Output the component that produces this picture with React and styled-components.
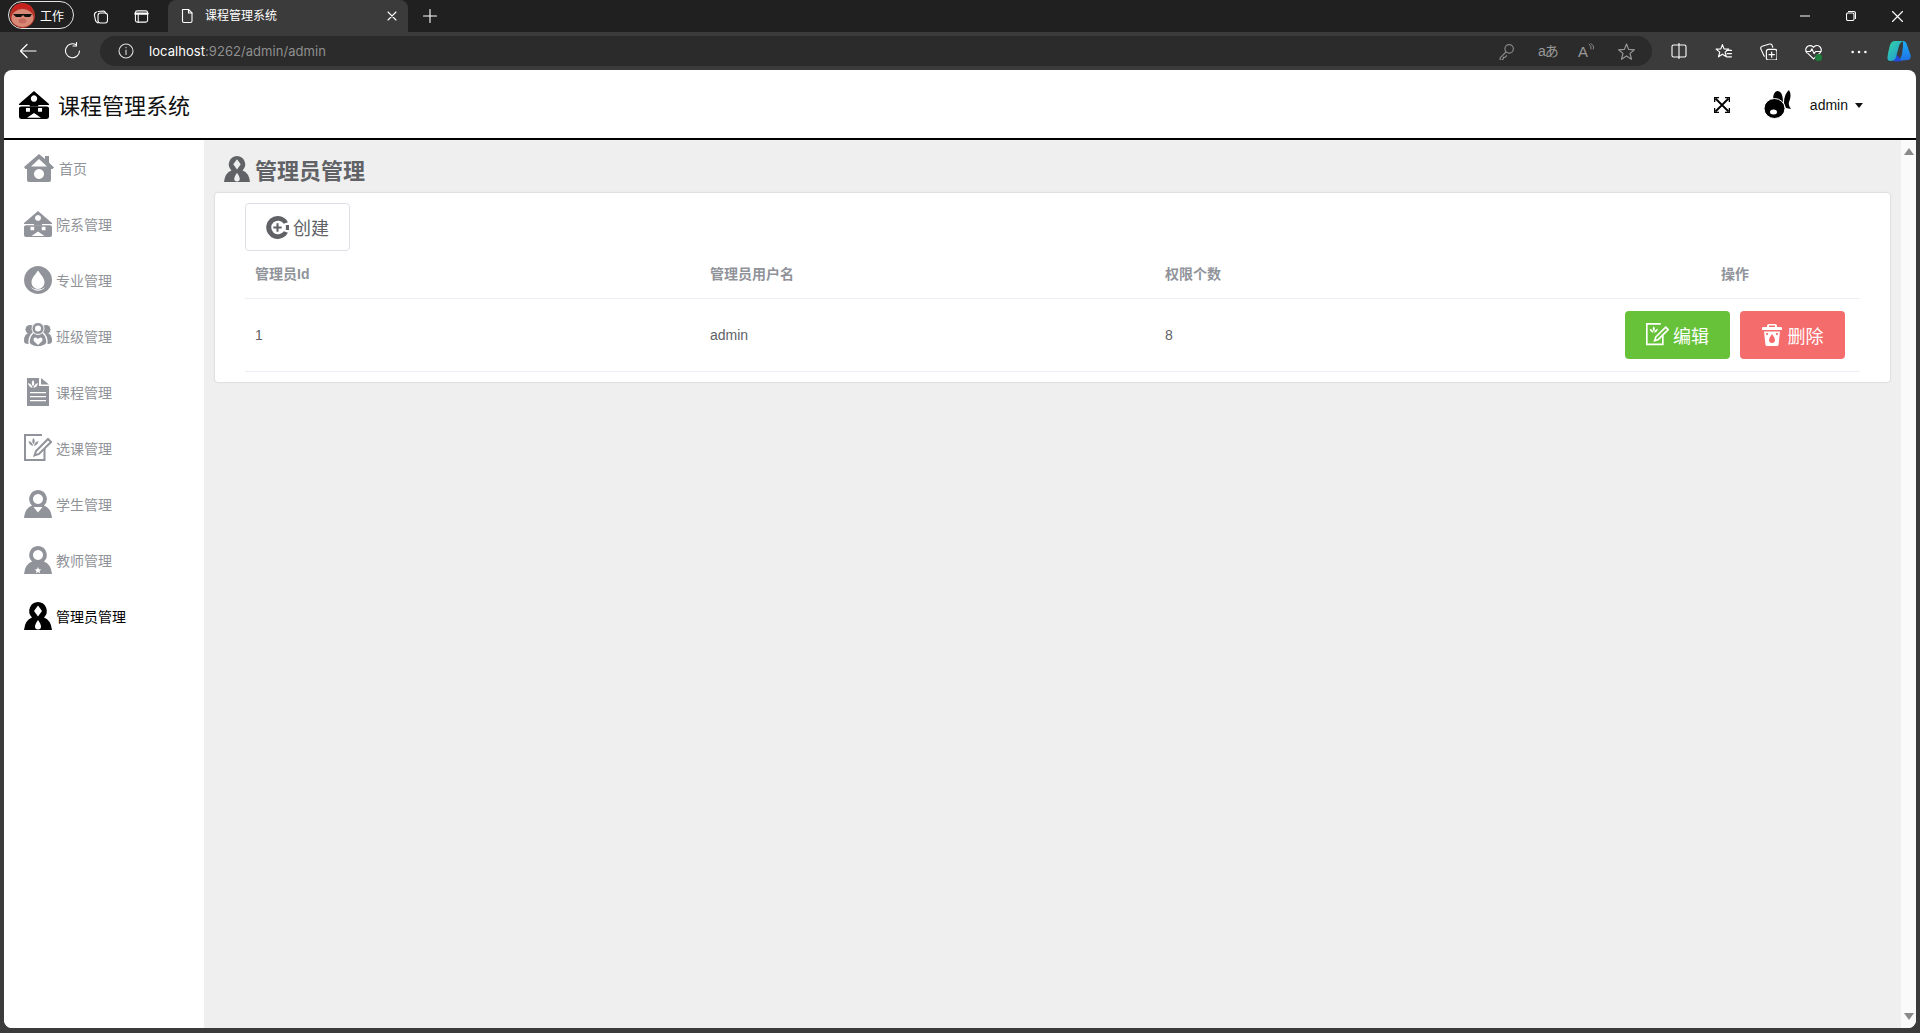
import React from "react";
import styled, { createGlobalStyle } from "styled-components";

const Global = createGlobalStyle`
  html, body { margin: 0; padding: 0; height: 100%; background: #3b3b3b; overflow: hidden; }
  #root { height: 100%; }
  * { box-sizing: border-box; }
  body { font-family: "Liberation Sans", "Noto Sans CJK SC", sans-serif; }
  table { border-collapse: collapse; }
`;

const Shell = styled.div`
  height: 1033px; width: 1920px; display: flex; flex-direction: column; background: #3b3b3b;
`;
const TabStrip = styled.div`
  height: 32px; background: #202020; display: flex; align-items: flex-end; color: #fff; flex: none;
`;
const Profile = styled.div`
  width: 66px; height: 28px; margin: 0 0 2px 8px; align-self: center; border: 1px solid #e4e4e4; border-radius: 14px;
  display: flex; align-items: center; gap: 5px; padding-left: 1px; font-size: 12px; color: #fff; flex: none;
`;
const StripIcon = styled.div`
  width: 16px; height: 32px; display: flex; align-items: center; justify-content: center; flex: none;
  margin-left: ${p => p.$ml}px;
  align-self: center;
`;
const Tab = styled.div`
  width: 240px; height: 32px; margin-left: 19px; background: #3b3b3b; border-radius: 8px 8px 0 0;
  display: flex; align-items: center; padding: 0 11px 0 11px; font-size: 12px; color: #fff; flex: none;
`;
const TabTitle = styled.span`
  margin-left: 10px; flex: 1; line-height: 16px;
`;
const WindowButtons = styled.div`
  margin-left: auto; display: flex; height: 32px; align-items: center; padding-right: 17px; gap: 36px;
`;
const Toolbar = styled.div`
  height: 38px; background: #3b3b3b; display: flex; align-items: center; flex: none; color: #fff;
`;
const NavIcon = styled.div`
  width: 18px; height: 18px; display: flex; align-items: center; justify-content: center; flex: none; margin-left: ${p => p.$ml}px;
`;
const Address = styled.div`
  width: 1552px; height: 30px; margin-left: 18px; background: #2b2b2b; border-radius: 15px; display: flex; align-items: center;
  padding-left: 18px; flex: none; position: relative;
`;
const Url = styled.div`
  margin-left: 15px; font-size: 13px; letter-spacing: 0.05px; color: #fff; font-family: "Inter", "Liberation Sans", sans-serif;
  span { color: #8f8f8f; }
`;
const AddrRight = styled.div`
  margin-left: auto; display: flex; gap: 23px; padding-right: 17px; align-items: center;
`;
const TranslateGlyph = styled.span`
  font-size: 14px; color: #999; width: 17px; line-height: 17px; white-space: nowrap; letter-spacing: -1px;
`;
const ReadAloud = styled.span`
  font-size: 15px; color: #999; width: 17px; height: 17px; line-height: 17px; display: flex; align-items: flex-start;
`;
const ToolRight = styled.div`
  display: flex; align-items: center; gap: 28px; margin-left: 19px;
`;
const HealthIcon = styled.div`
  position: relative; width: 17px; height: 17px;
`;
const HealthDot = styled.span`
  position: absolute; right: 0; bottom: -1px; width: 7px; height: 7px; border-radius: 4px; background: #1d7d3a;
`;
const CopilotWrap = styled.div`
  margin-left: -8px; display: flex;
`;

const Page = styled.div`
  width: 1912px; height: 958px; margin-left: 4px; background: #fff; border-radius: 8px; overflow: hidden; display: flex; flex-direction: column; flex: none;
`;
const Header = styled.header`
  height: 70px; border-bottom: 2px solid #000; display: flex; align-items: center; padding: 2px 0 0 15px; flex: none;
`;
const HeaderTitle = styled.div`
  font-size: 22px; color: #111; margin: 4px 0 0 9px; line-height: 30px;
`;
const HeaderRight = styled.div`
  margin-left: auto; display: flex; align-items: center; padding-right: 53px;
`;
const FullscreenSvg = styled.svg`
  margin-right: 34px;
`;
const UserName = styled.span`
  font-size: 14px; color: #111; margin-left: 16px;
`;
const Caret = styled.span`
  width: 0; height: 0; border-left: 4.5px solid transparent; border-right: 4.5px solid transparent; border-top: 5px solid #111; margin-left: 7px; display: block;
`;
const Body = styled.div`
  flex: 1; display: flex; min-height: 0;
`;
const Sidebar = styled.nav`
  width: 200px; background: #fff; flex: none;
`;
const NavItem = styled.div`
  height: 56px; display: flex; align-items: center; padding-left: 20px; font-size: 14px;
  color: ${p => (p.$active ? "#000" : "#909399")};
  gap: ${p => (p.$home ? 5 : 4)}px;
`;
const Content = styled.main`
  flex: 1; background: #efefef; padding: 9px 10px 0 10px; min-width: 0;
`;
const PageTitle = styled.div`
  display: flex; align-items: center; height: 43px; padding: 0 0 4px 10px; font-size: 22px; font-weight: 700; color: #606266; gap: 5px;
`;
const Card = styled.section`
  height: 191px; background: #fff; border: 1px solid #e0e0e0; border-radius: 4px; padding: 10px 29px 0 30px; box-shadow: 0 0 2px rgba(0,0,0,.04);
`;
const Btn = styled.button`
  width: 105px; height: 48px; border-radius: 4px; font-size: 18px; display: inline-flex; align-items: center; justify-content: center;
  gap: ${p => p.$gap || 4}px;
  font-family: inherit; padding: 0;
  border: 1px solid ${p => p.$border || "transparent"};
  background: ${p => p.$bg || "#fff"};
  color: ${p => p.$color || "#fff"};
`;
const Table = styled.table`
  width: 1615px; table-layout: fixed; color: #606266; font-size: 14px;
`;
const Th = styled.th`
  height: 47px; padding: 0 10px 2px; font-size: 14px; font-weight: 700; color: #909399; text-align: ${p => p.$center ? "center" : "left"};
  border-bottom: 1px solid #ebeef5; width: ${p => p.$w}px;
`;
const Td = styled.td`
  height: 73px; padding: 0 10px; border-bottom: 1px solid #ebeef5; text-align: ${p => p.$center ? "center" : "left"};
`;
const Actions = styled.div`
  display: flex; gap: 10px; justify-content: center;
`;
const Scrollbar = styled.div`
  width: 15px; background: #fafafa; display: flex; flex-direction: column; justify-content: space-between; align-items: center; padding: 8px 0 8px; flex: none;
`;
const Arrow = styled.span`
  display: block; width: 0; height: 0; border-left: 5px solid transparent; border-right: 5px solid transparent;
  ${p => p.$up ? "border-bottom: 7px solid #8a8a8a;" : "border-top: 7px solid #8a8a8a;"}
`;

const I = ({ s = 16, c = "#fff", w = 1.1, children, vb = 16 }) => (
  <svg width={s} height={s} viewBox={`0 0 ${vb} ${vb}`} fill="none" stroke={c} strokeWidth={w} strokeLinecap="round" strokeLinejoin="round">{children}</svg>
);

const HomeIcon = ({ c }) => (
  <svg width="30" height="30" viewBox="0 0 30 30" fill={c}><path fillRule="evenodd" d="M15 1 L21 6 V3 H25 V9.5 L30 14.5 L28.5 16 H27 V27 Q27 29 25 29 H5 Q3 29 3 27 V16 H1.5 L0 14 Z M15 16 a5 5 0 1 0 .01 0 Z M15 6 L7 13.5 H23 Z" /></svg>
);
const SchoolIcon = ({ c, w = 28, h = 26 }) => (
  <svg width={w} height={h} viewBox="0 0 28 26" fill={c}>
    <path fillRule="evenodd" d="M14 0 L28 12 V13 H18 V14.500 H10 V13 H0 V12 Z M14 4 a3 3 0 1 0 .01 0 Z" />
    <path fillRule="evenodd" d="M2 14.300 H26 Q28 14.300 28 16 V24 Q28 26 26 26 H2 Q0 26 0 24 V16 Q0 14.300 2 14.300 Z M6.500 15.800 V19.300 H10.200 V15.800 Z M17.800 15.800 V19.300 H21.500 V15.800 Z M14 20.500 L7.500 25 H20.500 Z" />
  </svg>
);
const DropIcon = ({ c }) => (
  <svg width="28" height="28" viewBox="0 0 28 28" fill={c}><path fillRule="evenodd" d="M14 0 a14 14 0 1 0 .01 0 Z M14 4.5 C10 10 7.5 12.5 7.5 16.5 a6.5 6.5 0 0 0 13 0 C20.500 12.5 18 10 14 4.5 Z M6.500 21 q7.500 5 15 0 q-7.500 7.500 -15 0 Z" /></svg>
);
const GroupIcon = ({ c }) => (
  <svg width="28" height="28" viewBox="0 0 28 28" fill={c}>
    <circle cx="6" cy="7.500" r="4.500" />
    <circle cx="22" cy="7.500" r="4.500" />
    <path d="M0 19 Q0 11 6 11 H22 Q28 11 28 19 Q28 22 24 22 H4 Q0 22 0 19 Z" />
    <path d="M14 4 L9 11 Q5 14 5 21 Q8 25 14 25 Q20 25 23 21 Q23 14 19 11 Z" stroke="#fff" strokeWidth="1.400" />
    <circle cx="14" cy="6.500" r="6" stroke="#fff" strokeWidth="1" />
    <circle cx="14" cy="6.500" r="3" fill="#fff" />
    <path d="M14 23 L9.800 19 Q8.800 15.800 11.500 15.500 Q13 15.500 14 17 Q15 15.500 16.500 15.500 Q19.200 15.800 18.200 19 Z" fill="#fff" />
  </svg>
);
const Leaves = ({ c = "#fff", x = 0, y = 0 }) => (
  <g transform={`translate(${x} ${y})`} fill={c} stroke="none">
    <path d="M5 0 q-2.500 3 0 6.500 q2.500 -3.500 0 -6.500 Z" />
    <path d="M0 3 q.5 4 4.500 5 q-.5 -4 -4.500 -5 Z" />
    <path d="M10 3 q-4 1 -4.500 5 q4 -1 4.500 -5 Z" />
  </g>
);
const DocIcon = ({ c }) => (
  <svg width="28" height="28" viewBox="0 0 28 28" fill={c}>
    <path d="M3 0 H15 V8 H25 V28 H3 Z" />
    <path d="M17 0 L25 6.500 H17 Z" />
    <Leaves x={4} y={2} />
    <path d="M6 14 h16 v1.300 H6 Z M6 18 h16 v1.300 H6 Z M6 22 h16 v1.300 H6 Z" fill="#fff" />
  </svg>
);
const EditIcon = ({ c, s = 28, w = 2 }) => (
  <svg width={s} height={s} viewBox="0 0 28 28" fill="none" stroke={c} strokeWidth={w}>
    <path d="M18 1 H1 V26 H20.500 V15" />
    <path d="M24 5 L27 8 L15 20 L10.500 21.500 L12 17 Z" />
    <Leaves c={c} x={4.500} y={4} />
  </svg>
);
const Person = ({ c, s = 28, inner, solid }) => (
  <svg width={s} height={s} viewBox="0 0 28 28" fill={c}>
    <path fillRule="evenodd" d={`M14 0 a9 9 0 0 1 6 15.500 Q27 18 28 28 H0 Q1 18 8 15.500 A9 9 0 0 1 14 0 Z${solid ? "" : " M14 4 a5 5 0 1 0 .01 0 Z"}`} />
    {inner}
  </svg>
);
const AdminMarks = ({ bg }) => (
  <>
    <path d="M14 3.500 L18 9 L14 14.500 L10 9 Z" fill={bg} />
    <path d="M14 18 q-3 4 -3 6.500 a3 3 0 0 0 6 0 q0 -2.500 -3 -6.500 Z" fill={bg} />
  </>
);
const Trash = () => (
  <svg width="20" height="22" viewBox="0 0 20 22" fill="#fff"><path fillRule="evenodd" d="M7 0 H13 Q15 0 15 2 V3 H19 Q20 3 20 4 V6 H0 V4 Q0 3 1 3 H5 V2 Q5 0 7 0 Z M7 1.500 V3 H13 V1.500 Z M2 7.500 H18 L16.500 21 Q16.400 22 15 22 H5 Q3.600 22 3.500 21 Z M10 10 Q7 14 7 16 a3 3 0 0 0 6 0 Q13 14 10 10 Z M5 9 a1 1 0 1 0 .01 0 Z M15 9 a1 1 0 1 0 .01 0 Z" /></svg>
);
const PlusCircle = () => (
  <svg width="23" height="23" viewBox="0 0 22 22" fill="#606266"><path fillRule="evenodd" d="M11 0 A11 11 0 0 1 21 6 L17 7.500 A6.500 6.500 0 1 0 17 14.500 L21 16 A11 11 0 1 1 11 0 Z" /><path d="M10 7 h2 v3 h3 v2 h-3 v3 h-2 v-3 h-3 v-2 h3 Z" /><path d="M19 8.500 h3 v5 h-3 Z" /></svg>
);
const Avatar = () => (
  <svg width="25" height="25" viewBox="0 0 25 25">
    <circle cx="12.500" cy="12.500" r="12.500" fill="#b3362a" />
    <path d="M3 9 Q12 1 22 9 L21 3 Q12 -2 4 3 Z" fill="#c8201c" />
    <ellipse cx="12.500" cy="15" rx="11" ry="9" fill="#d98a76" />
    <path d="M3 11 H22 L20 14 H15 L13 12 L11 14 H6 Z" fill="#111" />
    <ellipse cx="12.500" cy="18" rx="4" ry="2.500" fill="#c56a5e" />
  </svg>
);
const Copilot = () => (
  <svg width="24" height="22" viewBox="0 0 24 22">
    <defs>
      <linearGradient id="cpa" x1="0" y1="0" x2="1" y2="1"><stop offset="0" stopColor="#37d6a0" /><stop offset="1" stopColor="#1a8fe0" /></linearGradient>
      <linearGradient id="cpb" x1="0" y1="0" x2="0" y2="1"><stop offset="0" stopColor="#1bb0f5" /><stop offset="1" stopColor="#1f6fe8" /></linearGradient>
    </defs>
    <path d="M16 1 Q19 1 20 5 L23.500 15 Q24.500 19 21 20 L10 21 Q14 19 15 14 L16 6 Z" fill="url(#cpb)" />
    <path d="M7 14 Q12 15 14 21 Q10 22 6 21 Q8 18 7 14 Z" fill="#2148d8" />
    <path d="M8 1 H17 Q13 2 12 6 L9 17 Q8 21 3.500 21 Q0 21 .5 17 Q1 12 3 5 Q4.500 1 8 1 Z" fill="url(#cpa)" />
  </svg>
);
const BunnyLogo = () => (
  <svg width="30" height="30" viewBox="0 0 30 30" fill="#000">
    <path d="M9 10 Q9 2 13 1 Q19 1 19 12 Z" />
    <path d="M20 13 Q20 4 25 0 Q28 5 25 12 Q24 15 27 19 L22 18 Z" />
    <ellipse cx="10.500" cy="18.500" rx="10.500" ry="10" stroke="#fff" strokeWidth="1" />
    <ellipse cx="9.500" cy="22" rx="3.500" ry="2.500" fill="#fff" />
  </svg>
);

const navItems = [
  ["首页", HomeIcon], ["院系管理", SchoolIcon], ["专业管理", DropIcon], ["班级管理", GroupIcon], ["课程管理", DocIcon], ["选课管理", EditIcon],
  ["学生管理", p => <Person {...p} inner={<path d="M9.500 17 h9 l-4.500 5.500 Z" fill="#fff" />} />],
  ["教师管理", p => <Person {...p} inner={<path d="M14 21 l1 2.200 2.300 .2 -1.800 1.500 .6 2.300 -2.100 -1.200 -2.100 1.200 .6 -2.300 -1.800 -1.500 2.300 -.2 Z" fill="#fff" />} />],
  ["管理员管理", p => <Person {...p} solid inner={<AdminMarks bg="#fff" />} />],
];

export default function App() {
  return (
    <Shell>
      <Global />
      <TabStrip>
        <Profile><Avatar /><span>工作</span></Profile>
        <StripIcon $ml={18}>
          <I s={17}><rect x="6" y="4.500" width="9.500" height="10" rx="2.500" /><path d="M6 3 l5.500 -.5 Q13 2.500 13.500 4.500" /><path d="M4.500 3.500 Q2 4.500 2.500 7 L3.500 12 Q4 13.500 6 14.500" /></I>
        </StripIcon>
        <StripIcon $ml={25}>
          <I s={15}><rect x="1.500" y="2" width="13" height="12" rx="2" /><path d="M1.500 5 h13" strokeWidth="2.400" /><path d="M4.500 5 v9" /></I>
        </StripIcon>
        <Tab>
          <I s={16}><path d="M3.500 1.500 h6 l3.500 3.500 v8 a1.500 1.500 0 0 1 -1.500 1.500 h-6.500 a1.500 1.500 0 0 1 -1.500 -1.500 Z" /><path d="M9.500 1.500 v3.500 h3.500" /></I>
          <TabTitle>课程管理系统</TabTitle>
          <I s={10} vb={10}><path d="M1 1 L9 9 M9 1 L1 9" /></I>
        </Tab>
        <StripIcon $ml={14}>
          <I s={14} vb={14}><path d="M7 0.500 V13.500 M0.500 7 H13.500" /></I>
        </StripIcon>
        <WindowButtons>
          <I s={10} vb={10}><path d="M0 5 H10" /></I>
          <I s={10} vb={10}><rect x="0.500" y="2" width="7.500" height="7.500" rx="1.500" /><path d="M2.500 0.500 h5 a2 2 0 0 1 2 2 v5" /></I>
          <I s={11} vb={11}><path d="M0.500 0.500 L10.500 10.500 M10.500 0.500 L0.500 10.500" /></I>
        </WindowButtons>
      </TabStrip>
      <Toolbar>
        <NavIcon $ml={19}><I s={18} vb={18} w={1.2}><path d="M17 9 H1.500 M8 2.500 L1.500 9 L8 15.500" /></I></NavIcon>
        <NavIcon $ml={27}><I s={18} vb={18} w={1.1}><path d="M15.500 9 A7 7 0 1 1 12.500 3 M12.500 0.500 V4 H9" /></I></NavIcon>
        <Address>
          <I s={16} c="#ddd"><circle cx="8" cy="8" r="7" /><path d="M8 7 V11.500 M8 4.400 v.3" /></I>
          <Url>localhost<span>:9262/admin/admin</span></Url>
          <AddrRight>
            <I s={17} c="#8a8a8a"><circle cx="10.500" cy="5.500" r="4" /><path d="M7.500 8.500 L2 14 V16 H4 L5 15 V13.500 H6.500 L8 12" /></I>
            <TranslateGlyph>aあ</TranslateGlyph>
            <ReadAloud>A<I s={7} vb={7} c="#999" w={0.9}><path d="M1 1 Q4 3 3 6 M3 0.500 Q7 3 5.500 6" /></I></ReadAloud>
            <I s={17} c="#9a9a9a"><path d="M8 1 L10 6 L15.500 6.400 L11.300 9.800 L12.700 15.200 L8 12.200 L3.300 15.200 L4.700 9.800 L.500 6.400 L6 6 Z" /></I>
          </AddrRight>
        </Address>
        <ToolRight>
          <I s={16}><rect x="1" y="2" width="14" height="12" rx="1.500" /><path d="M8 0 V16" /></I>
          <I s={17}><path d="M7 1.500 L8.500 5.500 L13 5.800 L9.500 8.600 L10.700 13 L7 10.500 L3.300 13 L4.500 8.600 L1 5.800 L5.500 5.500 Z" /><path d="M11 7 h4.500 M11.500 10 h4 M11.500 13 h4" /></I>
          <I s={17}><rect x="6" y="6" width="10" height="10" rx="2" /><path d="M11 8.500 v5 M8.500 11 h5" /><path d="M4 12.500 L1 6 a2 2 0 0 1 1 -3 L9 1 a2 2 0 0 1 2.500 1.500 L12 4" /></I>
          <HealthIcon>
            <I s={17}><path d="M3 10 L8 15 L14 9.500 a4 4 0 0 0 -5.500 -6 L8 4 L7.500 3.500 a4 4 0 0 0 -5.500 6" /><path d="M1 8 H5 L6.500 5.500 L8.500 10 L10 8 H15" /></I>
            <HealthDot />
          </HealthIcon>
          <I s={17}><circle cx="2.500" cy="8.500" r="1.200" fill="#fff" stroke="none" /><circle cx="8.500" cy="8.500" r="1.200" fill="#fff" stroke="none" /><circle cx="14.500" cy="8.500" r="1.200" fill="#fff" stroke="none" /></I>
          <CopilotWrap><Copilot /></CopilotWrap>
        </ToolRight>
      </Toolbar>
      <Page>
        <Header>
          <SchoolIcon c="#000" w={30} h={28} />
          <HeaderTitle>课程管理系统</HeaderTitle>
          <HeaderRight>
            <FullscreenSvg width="16" height="16" viewBox="0 0 16 16" fill="none" stroke="#000" strokeWidth="1.800"><path d="M1.500 1.500 L14.500 14.500 M14.500 1.500 L1.500 14.500" /><path d="M0.500 5 V.5 H5 M11 .5 H15.500 V5 M15.500 11 V15.500 H11 M5 15.500 H.5 V11" strokeWidth="1.600" /></FullscreenSvg>
            <BunnyLogo />
            <UserName>admin</UserName>
            <Caret />
          </HeaderRight>
        </Header>
        <Body>
          <Sidebar>
            {navItems.map(([label, Icon], i) => {
              const active = i === navItems.length - 1;
              return (
                <NavItem key={label} $active={active} $home={i === 0}>
                  <Icon c={active ? "#000" : "#909399"} />
                  <span>{label}</span>
                </NavItem>
              );
            })}
          </Sidebar>
          <Content>
            <PageTitle>
              <Person c="#606266" s={26} solid inner={<AdminMarks bg="#efefef" />} />
              <span>管理员管理</span>
            </PageTitle>
            <Card>
              <Btn $border="#dcdfe6" $color="#606266"><PlusCircle /><span>创建</span></Btn>
              <Table>
                <thead>
                  <tr>
                    <Th $w={455}>管理员Id</Th>
                    <Th $w={455}>管理员用户名</Th>
                    <Th $w={455}>权限个数</Th>
                    <Th $center $w={250}>操作</Th>
                  </tr>
                </thead>
                <tbody>
                  <tr>
                    <Td>1</Td>
                    <Td>admin</Td>
                    <Td>8</Td>
                    <Td $center>
                      <Actions>
                        <Btn $bg="#67c23a"><EditIcon c="#fff" s={23} w={2} /><span>编辑</span></Btn>
                        <Btn $bg="#f56c6c" $gap={6}><Trash /><span>删除</span></Btn>
                      </Actions>
                    </Td>
                  </tr>
                </tbody>
              </Table>
            </Card>
          </Content>
          <Scrollbar>
            <Arrow $up />
            <Arrow />
          </Scrollbar>
        </Body>
      </Page>
    </Shell>
  );
}
